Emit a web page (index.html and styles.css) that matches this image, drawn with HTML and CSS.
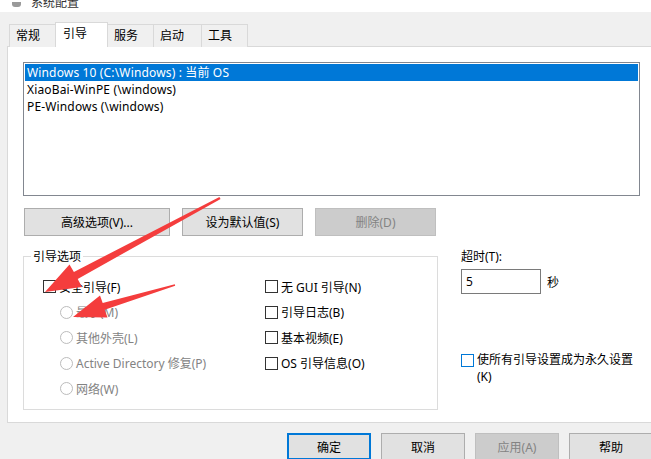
FILE: index.html
```html
<!DOCTYPE html>
<html lang="zh-CN">
<head>
    <meta charset="UTF-8">
    <title>系统配置</title>
    <link rel="stylesheet" href="styles.css">
</head>
<body>
    <div class="window">
        <div class="titlebar">
            <span class="title-icon"></span>
            <span class="title-text">系统配置</span>
        </div>

        <div class="tabs">
            <div class="tab tab-first">常规</div>
            <div class="tab active">引导</div>
            <div class="tab">服务</div>
            <div class="tab tab-wide">启动</div>
            <div class="tab">工具</div>
        </div>

        <div class="panel">
            <ul class="os-list">
                <li class="selected">Windows 10 (C:\Windows) : 当前 OS</li>
                <li>XiaoBai-WinPE (\windows)</li>
                <li>PE-Windows (\windows)</li>
            </ul>

            <div class="btn-row">
                <button class="btn btn-adv">高级选项(V)...</button>
                <button class="btn btn-mid">设为默认值(S)</button>
                <button class="btn btn-mid" disabled>删除(D)</button>
            </div>

            <div class="lower">
                <fieldset class="group">
                    <legend>引导选项</legend>
                    <div class="opts">
                        <div class="col">
                            <div class="opt"><span class="check"></span>安全引导(F)</div>
                            <div class="opt sub off"><span class="radio"></span>最小(M)</div>
                            <div class="opt sub off"><span class="radio"></span>其他外壳(L)</div>
                            <div class="opt sub off"><span class="radio"></span>Active Directory 修复(P)</div>
                            <div class="opt sub off"><span class="radio"></span>网络(W)</div>
                        </div>
                        <div class="col">
                            <div class="opt"><span class="check"></span>无 GUI 引导(N)</div>
                            <div class="opt"><span class="check"></span>引导日志(B)</div>
                            <div class="opt"><span class="check"></span>基本视频(E)</div>
                            <div class="opt"><span class="check"></span>OS 引导信息(O)</div>
                        </div>
                    </div>
                </fieldset>

                <div class="side">
                    <div class="timeout-label">超时(T):</div>
                    <div class="timeout-row">
                        <div class="timeout-input">5</div>
                        <span class="unit">秒</span>
                    </div>
                    <div class="perm">
                        <span class="check check-focus"></span>
                        <span class="perm-text">使所有引导设置成为永久设置(K)</span>
                    </div>
                </div>
            </div>
        </div>

        <div class="footer">
            <button class="btn btn-foot btn-default">确定</button>
            <button class="btn btn-foot">取消</button>
            <button class="btn btn-foot" disabled>应用(A)</button>
            <button class="btn btn-foot">帮助</button>
        </div>
    </div>

    <!-- red annotation arrows drawn over the dialog -->
    <svg class="arrows" width="651" height="459" viewBox="0 0 651 459">
        <polygon points="220.6,198.9 77.7,278.9 82,287 45,292 69.5,264.5 73.9,271.9 219.4,197.1" />
        <polygon points="175.2,285.8 104.7,309.8 107.5,317.5 73,317 100,295.5 102.7,303 174.8,284.2" />
    </svg>
</body>
</html>
```

FILE: styles.css
```css
:root {
    --window-bg: #f0f0f0;
    --panel-border: #d9d9d9;
    --accent: #0078d7;
    --text: #000000;
    --disabled-text: #838383;
    --btn-bg: #e1e1e1;
    --btn-border: #adadad;
}

* {
    box-sizing: border-box;
}

html,
body {
    margin: 0;
    padding: 0;
    width: 651px;
    height: 459px;
    overflow: hidden;
}

body {
    position: relative;
    background-color: var(--window-bg);
    color: var(--text);
    font-family: "Noto Sans", "Noto Sans CJK SC", sans-serif;
    font-size: 12px;
}

.window {
    width: 670px;
}

/* title bar, mostly cut off at the top */
.titlebar {
    height: 12px;
    background-color: #ffffff;
    overflow: hidden;
    display: flex;
    align-items: flex-end;
    padding-left: 12px;
}

.title-icon {
    width: 9px;
    height: 5px;
    background-color: #9a9a9a;
    border-radius: 0 0 3px 3px;
    margin-bottom: 5px;
}

.title-text {
    margin-left: 10px;
    line-height: 16px;
    margin-bottom: 1px;
    color: #333;
}

/* tabs */
.tabs {
    display: flex;
    align-items: flex-end;
    margin-top: 10px;
    padding-left: 9px;
    height: 25px;
    margin-bottom: -1px;
}

.tab {
    width: 47px;
    height: 23px;
    border: 1px solid var(--panel-border);
    border-bottom: none;
    margin-left: -1px;
    padding-left: 6px;
    line-height: 22px;
    background-color: var(--window-bg);
}

.tab-first {
    margin-left: 0;
}

.tab-wide {
    width: 49px;
}

.tab.active {
    position: relative;
    z-index: 1;
    width: 53px;
    height: 25px;
    background-color: #ffffff;
    line-height: 21px;
    padding-left: 7px;
}

/* tab page */
.panel {
    margin-left: 7px;
    height: 377px;
    background-color: #ffffff;
    border: 1px solid var(--panel-border);
    padding: 15px 0 0 15px;
}

.os-list {
    list-style: none;
    margin: 0;
    padding: 1px;
    width: 617px;
    height: 134px;
    border: 1px solid #828790;
}

.os-list li {
    height: 17px;
    line-height: 17px;
    padding-left: 2px;
    white-space: nowrap;
    letter-spacing: 0.15px;
}

.os-list li.selected {
    background-color: var(--accent);
    color: #ffffff;
}

.btn {
    font-family: inherit;
    font-size: 12px;
    color: var(--text);
    background-color: var(--btn-bg);
    border: 1px solid var(--btn-border);
    border-radius: 0;
    padding: 0;
    margin: 0;
}

.btn:disabled {
    background-color: #cccccc;
    border-color: #bfbfbf;
    color: var(--disabled-text);
}

.btn-row {
    display: flex;
    gap: 12px;
    margin: 12px 0 0 1px;
}

.btn-row .btn {
    height: 28px;
}

.btn-adv {
    width: 146px;
}

.btn-mid {
    width: 121px;
}

/* lower area */
.lower {
    display: flex;
    margin-top: 13px;
}

.group {
    width: 415px;
    height: 161px;
    margin: 0;
    padding: 0 0 0 19px;
    border: 1px solid #dcdcdc;
    min-width: 0;
}

.group legend {
    margin-left: -12px;
    padding: 0 2px;
    line-height: 15px;
}

.opts {
    display: grid;
    grid-template-columns: 222px 1fr;
    padding-top: 10px;
}

.opt {
    height: 25.5px;
    display: flex;
    align-items: center;
    white-space: nowrap;
}

.opt.sub {
    padding-left: 17px;
}

.opt.off {
    color: var(--disabled-text);
}

.check {
    width: 13px;
    height: 13px;
    border: 1px solid #333333;
    background-color: #ffffff;
    margin-right: 3px;
    flex-shrink: 0;
}

.check-focus {
    border-color: var(--accent);
}

.radio {
    width: 13px;
    height: 13px;
    border: 1px solid #bcbcbc;
    border-radius: 50%;
    background-color: #ffffff;
    margin-right: 3px;
}

.side {
    margin-left: 23px;
    width: 180px;
}

.timeout-label {
    line-height: 15px;
}

.timeout-row {
    display: flex;
    align-items: center;
    margin-top: 5px;
}

.timeout-input {
    width: 80px;
    height: 25px;
    border: 1px solid #7a7a7a;
    background-color: #ffffff;
    padding-left: 4px;
    line-height: 23px;
}

.unit {
    margin-left: 6px;
}

.perm {
    display: flex;
    align-items: flex-start;
    margin-top: 57px;
}

.perm .check {
    margin-top: 3px;
}

.perm-text {
    width: 163px;
    line-height: 17px;
}

/* dialog buttons */
.footer {
    display: flex;
    gap: 10px;
    padding: 10px 0 0 287px;
}

.btn-foot {
    width: 84px;
    height: 27px;
}

.btn-default {
    border: 2px solid var(--accent);
}

.arrows {
    position: absolute;
    left: 0;
    top: 0;
    pointer-events: none;
}

.arrows polygon {
    fill: #f43d3d;
}
```
